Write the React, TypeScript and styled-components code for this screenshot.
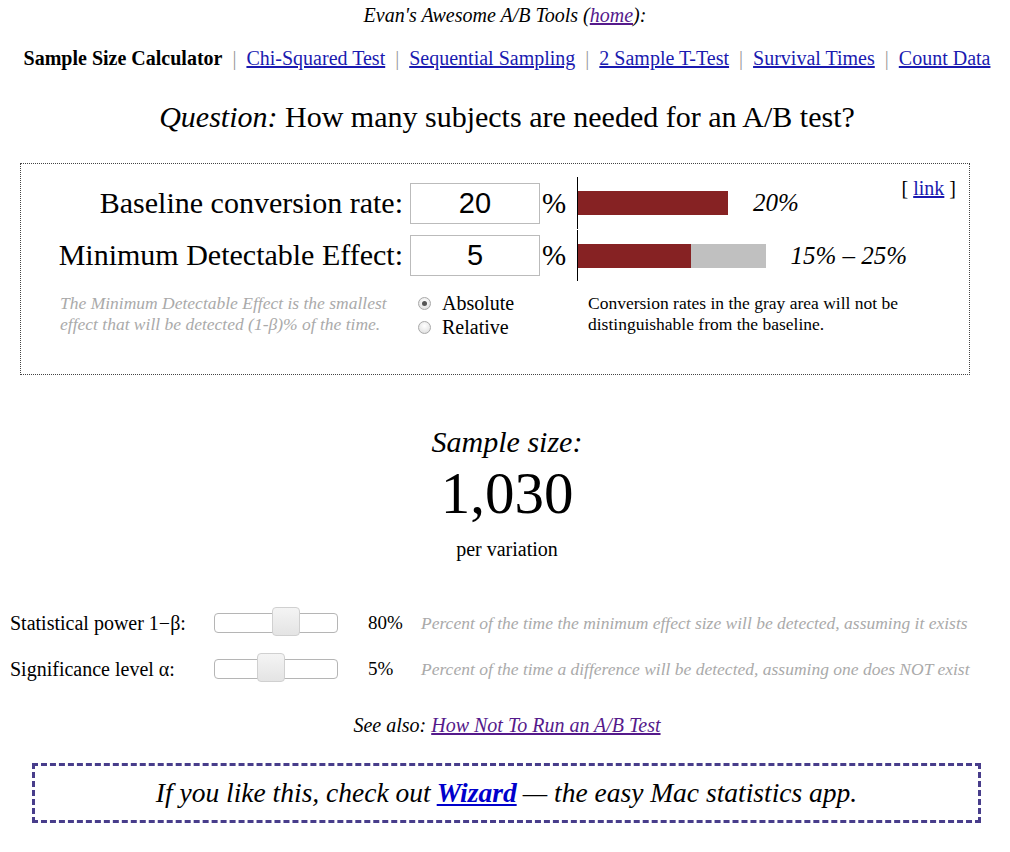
import { useState } from 'react';
import styled, { createGlobalStyle } from 'styled-components';

const GlobalStyle = createGlobalStyle`
  body {
    margin: 0;
    background: #fff;
    color: #000;
    font-family: "Liberation Serif", "Times New Roman", serif;
  }
`;

const Page = styled.div`
  width: 1010px;
`;

const Header = styled.div`
  padding-top: 4px;
  text-align: center;
  font-style: italic;
  font-size: 20px;
  line-height: 22px;
`;

const VisitedLink = styled.a`
  color: #551a8b;
  text-decoration: underline;
`;

const Nav = styled.div`
  margin-top: 21px;
  text-align: center;
  font-size: 20px;
  line-height: 22px;
  padding-left: 4px;
  white-space: nowrap;
`;

const Current = styled.b``;

const NavLink = styled.a`
  color: #1a1ab0;
  text-decoration: underline;
`;

const Sep = styled.span`
  color: #999;
  margin: 0 10px;
`;

const Question = styled.div`
  margin-top: 32px;
  text-align: center;
  font-size: 30px;
  line-height: 32px;
  padding-left: 4px;
`;

const Box = styled.div`
  margin: 30px 0 0 20px;
  width: 950px;
  height: 212px;
  box-sizing: border-box;
  border: 1px dotted #444;
  padding: 13px 13px 0 0;
`;

const Row = styled.div`
  display: flex;
  align-items: stretch;
  height: 52px;
`;

const Label = styled.div`
  width: 382px;
  text-align: right;
  font-size: 30px;
  align-self: center;
  white-space: nowrap;
`;

const NumInput = styled.input`
  align-self: center;
  margin-left: 7px;
  width: 130px;
  height: 41px;
  box-sizing: border-box;
  border: 1px solid #bbb;
  text-align: center;
  font-family: "Liberation Sans", Arial, sans-serif;
  font-size: 29px;
  padding: 0;
  outline: none;
`;

const Percent = styled.div`
  width: 37px;
  padding-left: 2px;
  box-sizing: border-box;
  font-size: 29px;
  align-self: center;
`;

const BarArea = styled.div<{ $top: number }>`
  display: flex;
  align-items: center;
  border-left: 1px solid #000;
  margin-top: ${(p) => p.$top}px;
`;

const Bar = styled.div<{ $w: number; $gray?: boolean }>`
  width: ${(p) => p.$w}px;
  height: 24px;
  background: ${(p) => (p.$gray ? '#c0c0c0' : '#862223')};
`;

const BarValue = styled.div`
  margin-left: 25px;
  font-style: italic;
  font-size: 25px;
  white-space: nowrap;
`;

const LinkBox = styled.div`
  margin-left: auto;
  font-size: 20px;
  line-height: 22px;
  align-self: flex-start;
`;

const Bottom = styled.div`
  display: flex;
  align-items: flex-start;
  margin-top: 12px;
  padding-left: 39px;
`;

const Note = styled.div`
  width: 358px;
  color: #aaa;
  font-style: italic;
  font-size: 17.5px;
  line-height: 21px;
`;

const Radios = styled.div`
  width: 170px;
  margin-top: -2px;
  font-size: 20px;
  line-height: 24px;
`;

const RadioRow = styled.label`
  display: flex;
  align-items: center;
  gap: 11px;
`;

const RadioDot = styled.span<{ $on: boolean }>`
  width: 13px;
  height: 13px;
  box-sizing: border-box;
  border-radius: 50%;
  border: 1px solid #a9a9a9;
  background: radial-gradient(circle at 50% 35%, #fff 0%, #e6e6e6 70%, #d0d0d0 100%);
  display: flex;
  align-items: center;
  justify-content: center;
  &::after {
    content: '';
    display: ${(p) => (p.$on ? 'block' : 'none')};
    width: 5px;
    height: 5px;
    border-radius: 50%;
    background: #555;
  }
`;

const Explain = styled.div`
  width: 330px;
  font-size: 17.5px;
  line-height: 21px;
`;

const Result = styled.div`
  margin-top: 51px;
  text-align: center;
  padding-left: 4px;
`;

const ResultTitle = styled.div`
  font-style: italic;
  font-size: 30px;
  line-height: 32px;
`;

const ResultNumber = styled.div`
  margin-top: 5px;
  font-size: 59px;
  line-height: 60px;
`;

const ResultUnit = styled.div`
  margin-top: 15px;
  font-size: 20px;
  line-height: 22px;
`;

const Sliders = styled.div`
  margin-top: 48px;
  display: flex;
  flex-direction: column;
  gap: 16px;
  padding-left: 10px;
`;

const SliderRow = styled.div`
  display: flex;
  align-items: center;
  height: 30px;
  white-space: nowrap;
`;

const SliderLabel = styled.div`
  width: 204px;
  font-size: 20px;
`;

const Track = styled.div`
  position: relative;
  width: 124px;
  height: 20px;
  box-sizing: border-box;
  border: 1px solid #b5b5b5;
  border-radius: 4px;
  background: #fff;
`;

const Thumb = styled.div`
  position: absolute;
  top: -7px;
  width: 28px;
  height: 29px;
  box-sizing: border-box;
  border: 1px solid #d0d0d0;
  border-radius: 4px;
  background: linear-gradient(#f4f4f4, #e4e4e4);
`;

const SliderValue = styled.div`
  width: 53px;
  margin-left: 30px;
  font-size: 19px;
`;

const SliderNote = styled.div`
  color: #aaa;
  font-style: italic;
  font-size: 17.5px;
`;

const SeeAlso = styled.div`
  margin-top: 30px;
  text-align: center;
  font-style: italic;
  font-size: 20px;
  line-height: 22px;
  padding-left: 4px;
`;

const Promo = styled.div`
  margin: 27px 0 0 32px;
  width: 949px;
  height: 60px;
  box-sizing: border-box;
  border: 3px dashed #483d8b;
  display: flex;
  align-items: center;
  justify-content: center;
  font-style: italic;
  font-size: 27.5px;
  white-space: nowrap;
`;

const PromoLink = styled.a`
  color: #0000cc;
  font-weight: bold;
  text-decoration: underline;
  margin: 0 6px;
`;

const SCALE = 7.5;

export default function App() {
  const [baseline, setBaseline] = useState('20');
  const [mde, setMde] = useState('5');
  const [absolute, setAbsolute] = useState(true);

  const b = parseFloat(baseline) || 0;
  const m = parseFloat(mde) || 0;
  const lo = Math.max(0, b - m);
  const hi = b + m;

  const navItems = ['Chi-Squared Test', 'Sequential Sampling', '2 Sample T-Test', 'Survival Times', 'Count Data'];

  return (
    <Page>
      <GlobalStyle />
      <Header>
        Evan's Awesome A/B Tools (<VisitedLink href="#">home</VisitedLink>):
      </Header>

      <Nav>
        <Current>Sample Size Calculator</Current>
        {navItems.map((n) => (
          <span key={n}>
            <Sep>|</Sep>
            <NavLink href="#">{n}</NavLink>
          </span>
        ))}
      </Nav>

      <Question>
        <i>Question:</i> How many subjects are needed for an A/B test?
      </Question>

      <Box>
        <Row>
          <Label>Baseline conversion rate:</Label>
          <NumInput value={baseline} onChange={(e) => setBaseline(e.target.value)} />
          <Percent>%</Percent>
          <BarArea $top={0}>
            <Bar $w={b * SCALE} />
            <BarValue>{b}%</BarValue>
          </BarArea>
          <LinkBox>
            [ <NavLink href="#">link</NavLink> ]
          </LinkBox>
        </Row>
        <Row>
          <Label>Minimum Detectable Effect:</Label>
          <NumInput value={mde} onChange={(e) => setMde(e.target.value)} />
          <Percent>%</Percent>
          <BarArea $top={1}>
            <Bar $w={lo * SCALE} />
            <Bar $w={(hi - lo) * SCALE} $gray />
            <BarValue>
              {lo}% – {hi}%
            </BarValue>
          </BarArea>
        </Row>

        <Bottom>
          <Note>
            The Minimum Detectable Effect is the smallest
            <br />
            effect that will be detected (1-β)% of the time.
          </Note>
          <Radios>
            <RadioRow onClick={() => setAbsolute(true)}>
              <RadioDot $on={absolute} />
              Absolute
            </RadioRow>
            <RadioRow onClick={() => setAbsolute(false)}>
              <RadioDot $on={!absolute} />
              Relative
            </RadioRow>
          </Radios>
          <Explain>
            Conversion rates in the gray area will not be distinguishable from the baseline.
          </Explain>
        </Bottom>
      </Box>

      <Result>
        <ResultTitle>Sample size:</ResultTitle>
        <ResultNumber>1,030</ResultNumber>
        <ResultUnit>per variation</ResultUnit>
      </Result>

      <Sliders>
        <SliderRow>
          <SliderLabel>Statistical power 1−β:</SliderLabel>
          <Track>
            <Thumb style={{ left: 57 }} />
          </Track>
          <SliderValue>80%</SliderValue>
          <SliderNote>Percent of the time the minimum effect size will be detected, assuming it exists</SliderNote>
        </SliderRow>
        <SliderRow>
          <SliderLabel>Significance level α:</SliderLabel>
          <Track>
            <Thumb style={{ left: 42 }} />
          </Track>
          <SliderValue>5%</SliderValue>
          <SliderNote>Percent of the time a difference will be detected, assuming one does NOT exist</SliderNote>
        </SliderRow>
      </Sliders>

      <SeeAlso>
        See also: <VisitedLink href="#">How Not To Run an A/B Test</VisitedLink>
      </SeeAlso>

      <Promo>
        If you like this, check out<PromoLink href="#">Wizard</PromoLink>— the easy Mac statistics app.
      </Promo>
    </Page>
  );
}
